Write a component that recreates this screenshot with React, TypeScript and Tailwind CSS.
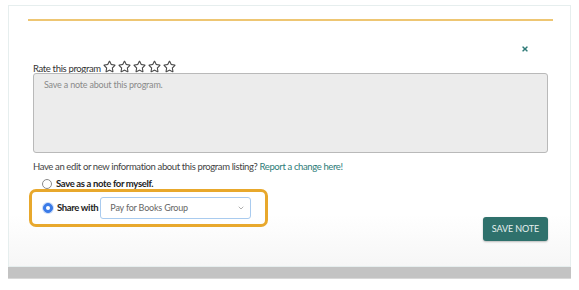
import React from 'react';
import { FaRegStar, FaTimes } from 'react-icons/fa';
import { ChevronDown } from 'lucide-react';

const Radio = ({ checked }: { checked?: boolean }) =>
    checked ? (
        <span className="w-[10px] h-[10px] rounded-full bg-[#3b7be8] border border-[#3b7be8] flex items-center justify-center shadow-[0_0_0_1px_#c9dcfa]">
            <span className="w-[4px] h-[4px] rounded-full bg-white" />
        </span>
    ) : (
        <span className="w-[10px] h-[10px] rounded-full border border-[#8a8a8a] bg-white" />
    );

const App = () => {
    return (
        <div className="w-[579px] h-[290px] bg-white pt-[5px] font-['Lato',sans-serif] text-[#333]">
            {/* Card */}
            <div className="ml-[8px] w-[563px] h-[262px] border border-[#e6eeee] bg-gradient-to-b from-white from-80% to-[#f6f6f6] flex flex-col">
                {/* Gold rule */}
                <div className="mt-[13px] ml-[19px] w-[525px] h-[2px] bg-[#eec673]" />

                <div className="flex justify-end pr-[41px] mt-[24px]">
                    <FaTimes className="w-[8px] h-[8px] text-[#2f7b78]" />
                </div>

                <div className="pl-[24px] pr-[22px] flex flex-col">
                    {/* Rating */}
                    <div className="flex items-end gap-[2px] mt-[7px] h-[13px]">
                        <span className="text-[9.5px] leading-none tracking-[-0.35px]">Rate this program</span>
                        <div className="flex gap-[2px]">
                            {[0, 1, 2, 3, 4].map((i) => (
                                <FaRegStar key={i} className="w-[13px] h-[13px] text-[#4a4a4a]" />
                            ))}
                        </div>
                    </div>

                    {/* Note box */}
                    <div className="h-[80px] bg-[#ececec] border border-[#b9b9b9] rounded-[3px] px-[10px] pt-[4px] text-[9px] tracking-[-0.2px] text-[#8a8a8a]">
                        Save a note about this program.
                    </div>

                    <p className="mt-[8px] text-[9.5px] leading-[12px] tracking-[-0.38px] text-[#444]">
                        Have an edit or new information about this program listing?{' '}
                        <span className="text-[#2e7c78]">Report a change here!</span>
                    </p>

                    <div className="mt-[5px] ml-[9px] flex items-center gap-[4px] h-[12px]">
                        <Radio />
                        <span className="text-[9.5px] font-bold tracking-[-0.35px] text-[#222]">Save as a note for myself.</span>
                    </div>

                    <div className="flex items-start justify-between">
                        {/* Share with */}
                        <div className="-ml-[4px] -mt-[1px] w-[239px] h-[38px] border-[3px] border-[#e8a82c] rounded-[7px] flex items-center pl-[11px] gap-[4px]">
                            <Radio checked />
                            <span className="text-[9.5px] font-bold tracking-[-0.35px] text-[#222]">Share with</span>
                            <div className="-ml-[2px] w-[151px] h-[22px] border border-[#a9cbef] rounded-[3px] bg-white flex items-center justify-between pl-[9px] pr-[5px]">
                                <span className="text-[9px] tracking-[-0.2px] text-[#666]">Pay for Books Group</span>
                                <ChevronDown className="w-[8px] h-[8px] text-[#888]" />
                            </div>
                        </div>

                        {/* Save */}
                        <button className="mt-[27px] w-[65px] h-[24px] rounded-[3px] bg-[#2f716c] shadow-[0_1px_2px_rgba(0,0,0,0.25)] text-[9px] text-[#e6f0ef] tracking-[-0.1px]">
                            SAVE NOTE
                        </button>
                    </div>
                </div>
            </div>
            <div className="ml-[8px] w-[563px] h-[12px] bg-[#c3c3c3] border-b border-[#d8d8d8]" />
        </div>
    );
};

export default App;
